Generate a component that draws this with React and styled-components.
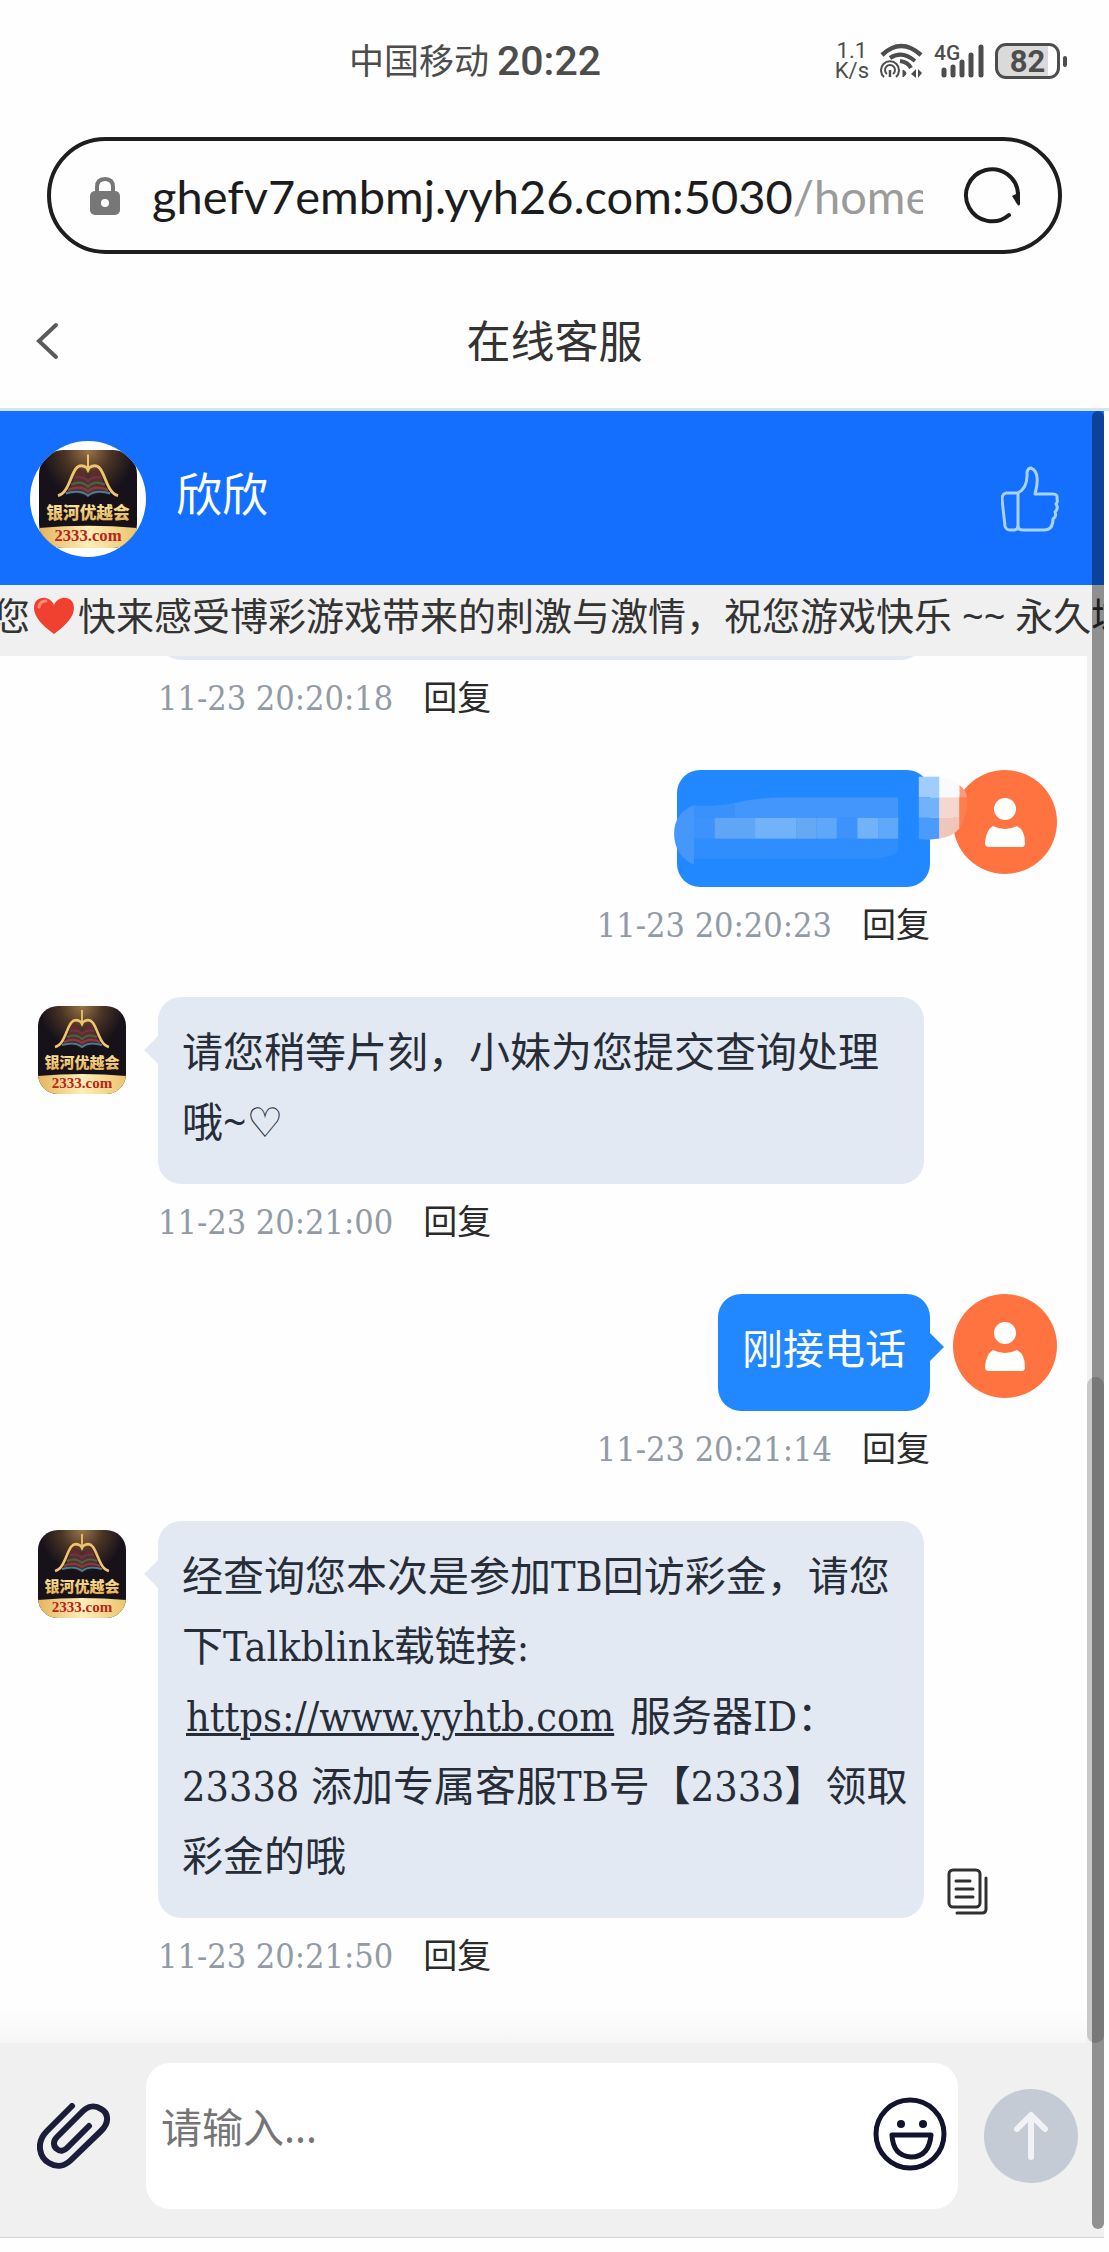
import React, { useState } from 'react';
import styled, { createGlobalStyle } from 'styled-components';

const sans = '"Noto Sans", "Noto Sans CJK SC", sans-serif';
const serif = '"DejaVu Serif Condensed", "Liberation Serif", "Noto Sans CJK SC", serif';

const GlobalStyle = createGlobalStyle`
  * {
    box-sizing: border-box;
  }
  body {
    margin: 0;
    background: #fefefe;
    font-family: ${sans};
    color: #333;
  }
  button {
    border: 0;
    padding: 0;
    background: none;
    font: inherit;
    color: inherit;
    display: flex;
    align-items: center;
    justify-content: center;
  }
  svg {
    display: block;
    flex: none;
  }
`;

const Page = styled.div`
  min-height: 100vh;
  display: flex;
  flex-direction: column;
  padding-bottom: 14px;
`;

const StatusBar = styled.div`
  display: flex;
  align-items: center;
  justify-content: space-between;
  height: 122px;
  padding: 0 42px 0 349px;
  color: #4d4d4d;
`;

const Carrier = styled.div`
  display: flex;
  align-items: center;
  gap: 8px;
  font-size: 35px;
  line-height: 48px;
`;

const Clock = styled.span`
  font-family: Roboto, sans-serif;
  font-size: 41px;
  font-weight: 500;
`;

const Indicators = styled.div`
  display: flex;
  align-items: center;
  justify-content: flex-end;
  gap: 11px;
`;

const Speed = styled.div`
  font-family: Roboto, sans-serif;
  font-size: 22px;
  line-height: 20px;
  text-align: center;
`;

const Battery = styled.div`
  display: flex;
  align-items: center;
  gap: 3px;

  &::after {
    content: '';
    width: 4px;
    height: 11px;
    border-radius: 2px;
    background: #4d4d4d;
  }
`;

const BatteryBody = styled.span`
  width: 65px;
  height: 36px;
  border: 3px solid #4d4d4d;
  border-radius: 11px;
  background: linear-gradient(90deg, #dadada 85%, #fefefe 85%);
  font-family: Roboto, sans-serif;
  font-size: 31px;
  font-weight: 700;
  line-height: 31px;
  text-align: center;
`;

const AddressBar = styled.div`
  display: flex;
  align-items: center;
  height: 117px;
  margin: 15px 47px 0;
  padding: 0 37px 0 39px;
  border: 4px solid #1e1e1e;
  border-radius: 59px;
`;

const Url = styled.div`
  flex: 1;
  min-width: 0;
  margin: 0 40px 0 32px;
  overflow: hidden;
  white-space: nowrap;
  font-family: Lato, sans-serif;
  font-size: 47px;
  line-height: 64px;
  color: #1c1c1c;

  span {
    color: #9b9b9b;
  }
`;

const TitleBar = styled.header`
  display: grid;
  grid-template-columns: 60px 1fr 60px;
  align-items: center;
  height: 157px;
  padding: 20px 18px 0;
  border-bottom: 3px solid #d3e6f5;

  h1 {
    margin: 0;
    font-size: 44px;
    font-weight: 400;
    line-height: 64px;
    text-align: center;
  }
`;

const Chat = styled.main`
  position: relative;
  flex: 1;
  display: flex;
  flex-direction: column;
  margin-right: 5px;
`;

const AgentBar = styled.div`
  display: flex;
  align-items: center;
  gap: 30px;
  height: 174px;
  padding: 2px 45px 0 30px;
  background: #146fff;
  color: #fff;
`;

const AgentPhoto = styled.div`
  display: flex;
  align-items: center;
  justify-content: center;
  width: 116px;
  height: 116px;
  overflow: hidden;
  border-radius: 50%;
  background: #fff;
`;

const PhotoCrop = styled.div`
  border-radius: 24px;
  overflow: hidden;
`;

const AgentName = styled.div`
  flex: 1;
  padding-bottom: 12px;
  font-size: 46px;
  line-height: 64px;
`;

const Notice = styled.div`
  display: flex;
  align-items: center;
  height: 71px;
  padding-bottom: 12px;
  overflow: hidden;
  background: #f0f0f0;
  font-size: 38px;
  line-height: 56px;
  white-space: pre;

  &::before {
    content: '';
    margin-left: -8px;
  }
  svg {
    margin: 0 2px;
  }
`;

const Conversation = styled.div`
  flex: 1;
  display: flex;
  min-height: 0;
`;

const Messages = styled.div`
  flex: 1;
  display: flex;
  flex-direction: column;
  justify-content: flex-end;
  gap: 34px;
  height: 1387px;
  padding: 0 29px 49px 38px;
  overflow: hidden;
  background: linear-gradient(0deg, #f6f6f6, #fefefe 36px);
`;

const Row = styled.div`
  flex: none;
  display: flex;
  align-items: flex-start;
  justify-content: ${(p) => (p.$mine ? 'flex-end' : 'flex-start')};
  gap: ${(p) => (p.$mine ? '23px' : '32px')};
`;

const AgentIcon = styled.div`
  width: 88px;
  height: 88px;
  margin-top: 9px;
  flex: none;
  border-radius: 20px;
  overflow: hidden;
`;

const Body = styled.div`
  display: flex;
  flex-direction: column;
  align-items: ${(p) => (p.$mine ? 'flex-end' : 'flex-start')};
`;

const BubbleLine = styled.div`
  display: flex;
  align-items: flex-end;
  gap: 23px;

  button {
    padding-bottom: 3px;
  }
`;

const Bubble = styled.div`
  position: relative;
  width: ${(p) => (p.$mine ? 'auto' : '766px')};
  min-width: ${(p) => (p.$hidden ? '253px' : '0')};
  min-height: ${(p) => (p.$mine ? '117px' : '187px')};
  padding: ${(p) => (p.$mine ? '21px 24px 26px' : '21px 8px 26px 24px')};
  border-radius: 23px;
  background: ${(p) => (p.$mine ? '#2288ff' : '#e3e9f2')};
  color: ${(p) => (p.$mine ? '#fff' : '#272d38')};
  font-family: ${serif};
  font-size: 41px;
  line-height: 70px;

  &::after {
    content: '';
    display: ${(p) => (p.$hidden ? 'none' : 'block')};
    position: absolute;
    top: 39px;
    ${(p) => (p.$mine ? 'left: 100%' : 'right: 100%')};
    border: 14px solid transparent;
    border-${(p) => (p.$mine ? 'right' : 'left')}-width: 0;
    border-${(p) => (p.$mine ? 'left' : 'right')}-color: ${(p) => (p.$mine ? '#2288ff' : '#e3e9f2')};
  }
  a {
    margin: 0 4px;
    color: inherit;
    text-decoration-thickness: 3px;
  }
`;

const Mood = styled.span`
  font-family: "Noto Sans", "DejaVu Sans", sans-serif;
  line-height: 40px;
`;

const Mosaic = styled.svg`
  position: absolute;
  top: 5px;
  left: -5px;
  z-index: 1;
`;

const Meta = styled.div`
  display: flex;
  align-items: center;
  gap: 30px;
  height: 76px;
  font-family: ${serif};
  font-size: 34px;
  line-height: 48px;
  color: #929ba5;

  button {
    color: #2b2b2b;
  }
`;

const ScrollTrack = styled.div`
  display: flex;
  align-items: flex-end;
  width: 17px;
  background: #f0f0f0;
`;

const ScrollThumb = styled.div`
  width: 17px;
  height: 48%;
  border-radius: 9px;
  background: #c8c8c8;
`;

const PageScroll = styled.div`
  position: absolute;
  top: 0;
  right: 0;
  bottom: 9px;
  width: 12px;
  border-radius: 6px;
  background: rgba(0, 0, 0, 0.4);
`;

const Composer = styled.form`
  display: flex;
  align-items: center;
  height: 195px;
  padding: 0 26px 8px 37px;
  border-bottom: 1px solid #d2d2d2;
  background: #f0f0f0;
`;

const InputBox = styled.div`
  flex: 1;
  display: flex;
  align-items: center;
  height: 146px;
  margin: 0 26px 0 35px;
  padding: 0 10px 0 15px;
  border-radius: 24px;
  background: #fff;

  input {
    flex: 1;
    min-width: 0;
    height: 100%;
    padding: 0 0 18px;
    border: 0;
    outline: 0;
    background: none;
    font-family: ${sans};
    font-size: 41px;
  }
  input::placeholder {
    color: #757575;
  }
  button {
    padding-bottom: 4px;
  }
`;

const SendButton = styled.button`
  && {
    width: 94px;
    height: 94px;
    border-radius: 50%;
    background: #c5cbd4;
  }
`;

function BrandLogo({ size }) {
  return (
    <svg width={size} height={size} viewBox="0 0 88 88" role="img" aria-label="银河优越会">
      <defs>
        <radialGradient id="glow" cx="50%" cy="0%" r="48%">
          <stop offset="0" stopColor="#9a7448" />
          <stop offset="0.5" stopColor="#4a3425" />
          <stop offset="1" stopColor="#17121a" />
        </radialGradient>
        <linearGradient id="gold" x1="0" y1="0" x2="0" y2="1">
          <stop offset="0" stopColor="#fff0a8" />
          <stop offset="1" stopColor="#e2a94c" />
        </linearGradient>
        <linearGradient id="band" x1="0" y1="0" x2="1" y2="0">
          <stop offset="0" stopColor="#e5b45c" />
          <stop offset="0.5" stopColor="#fdeeb8" />
          <stop offset="1" stopColor="#ecc46c" />
        </linearGradient>
      </defs>
      <rect width="88" height="88" fill="url(#glow)" />
      <path d="M44 25 L36 16 C31 23 30 32 25 38 Q36 33 44 40 Q52 33 63 38 C58 32 57 23 52 16 Z" fill="#5c2d2b" />
      <path d="M32 25 Q39 23 44 28 Q49 23 56 25" fill="none" stroke="#6c3648" strokeWidth="2" />
      <path d="M29 31 Q38 27 44 33 Q50 27 59 31" fill="none" stroke="#3f6848" strokeWidth="2" />
      <path d="M26 36 Q37 31 44 37 Q51 31 62 36" fill="none" stroke="#8a3a44" strokeWidth="2" />
      <path d="M24 39 Q37 35 44 41 Q51 35 64 39" fill="none" stroke="#4a7c90" strokeWidth="2" />
      <path d="M17 41 C26 39 28 24 33 17 Q37 12 43 16 L44 18 L45 16 Q51 12 55 17 C60 24 62 39 71 41" fill="none" stroke="#eec46c" strokeWidth="2.6" />
      <path d="M44 4 V19" stroke="#eec46c" strokeWidth="1.8" />
      <text x="44" y="62" textAnchor="middle" fontFamily="Noto Sans CJK SC" fontWeight="900" fontSize="15" fill="url(#gold)">
        银河优越会
      </text>
      <path d="M0 70 Q44 66 88 70 V88 H0 Z" fill="url(#band)" />
      <text x="44" y="82" textAnchor="middle" fontFamily="Liberation Serif" fontWeight="700" fontSize="15" fill="#b8251a">
        2333.com
      </text>
    </svg>
  );
}

function UserAvatar() {
  return (
    <svg width="105" height="105" viewBox="0 0 105 105">
      <circle cx="52" cy="52" r="52" fill="#ff7340" />
      <circle cx="52" cy="39" r="11" fill="#fff" />
      <path d="M40 56 Q52 62 64 56 Q72 60 72 73 Q72 77 69 77 H36 Q32 77 32 73 Q33 60 40 56 Z" fill="#fff" />
    </svg>
  );
}

function HiddenText() {
  return (
    <Mosaic width="298" height="92" viewBox="320 100 850 275" preserveAspectRatio="none">
      <path d="M383 192 H440 C500 188 540 166 640 167 H965 V330 Q940 345 900 350 H383 Z" fill="#308dfd" />
      <path d="M383 190 C345 205 326 235 326 275 C326 318 345 350 383 368 Z" fill="#4697fa" />
      <path d="M383 192 H440 C460 191 480 188 498 184 V228 H383 Z" fill="#3a91fc" />
      <path d="M498 184 Q560 168 640 167 H965 V228 H498 Z" fill="#4296fc" />
      <rect x="383" y="228" width="582" height="62" fill="#3d92fc" />
      <rect x="442" y="228" width="115" height="62" fill="#5fa6f6" />
      <rect x="557" y="228" width="118" height="62" fill="#72b2f8" />
      <rect x="675" y="228" width="57" height="62" fill="#65a9f3" />
      <rect x="732" y="228" width="58" height="62" fill="#5ea7fa" />
      <rect x="849" y="228" width="59" height="62" fill="#72b2f8" />
      <rect x="908" y="228" width="57" height="62" fill="#60a8fb" />
      <rect x="1024" y="105" width="59" height="62" fill="#a0cdfd" />
      <rect x="1024" y="167" width="59" height="61" fill="#70b2fb" />
      <path d="M1024 228 H1083 V290 Q1050 296 1024 291 Z" fill="#4b9bfc" />
      <path d="M1083 105 Q1115 108 1140 130 V167 H1083 Z" fill="#f8fafc" />
      <rect x="1083" y="167" width="57" height="61" fill="#f6d7cd" />
      <path d="M1083 228 H1140 V260 Q1120 285 1083 290 Z" fill="#efc6b9" />
      <path d="M1140 130 Q1158 145 1162 167 H1140 Z" fill="#fb9a7c" />
      <path d="M1140 167 H1162 Q1166 215 1140 260 Z" fill="#fd7f50" />
    </Mosaic>
  );
}

function CopyIcon() {
  return (
    <svg width="42" height="47" viewBox="0 0 42 47" fill="none" stroke="#303030" strokeWidth="3" strokeLinecap="round">
      <rect x="2" y="2" width="31" height="37" rx="4" />
      <path d="M9 13 H23 M9 21 H26 M9 29 H26" />
      <path d="M39 10 V41 Q39 45 35 45 H10" />
    </svg>
  );
}

function Message({ mine, hidden, time, copy, children }) {
  return (
    <Row $mine={mine}>
      {!mine && (
        <AgentIcon>
          <BrandLogo size={88} />
        </AgentIcon>
      )}
      <Body $mine={mine}>
        <BubbleLine>
          <Bubble $mine={mine} $hidden={hidden}>
            {hidden ? <HiddenText /> : children}
          </Bubble>
          {copy && <button type="button" aria-label="复制"><CopyIcon /></button>}
        </BubbleLine>
        <Meta>
          <time>{time}</time>
          <button type="button">回复</button>
        </Meta>
      </Body>
      {mine && <UserAvatar />}
    </Row>
  );
}

function PhoneStatus() {
  return (
    <StatusBar>
      <Carrier>
        中国移动
        <Clock>20:22</Clock>
      </Carrier>
      <Indicators>
        <Speed>
          1.1
          <br />
          K/s
        </Speed>
        <svg width="43" height="36" viewBox="0 0 43 36" fill="none" stroke="#4d4d4d">
          <path d="M2 12 Q21 -6 41 12" strokeWidth="4.5" />
          <path d="M10 15 Q22 7 35 18" strokeWidth="4" />
          <path d="M20 18 Q28 19 31 25" strokeWidth="4" />
          <path d="M4 34 A9 9 0 1 1 16 34" strokeWidth="2" />
          <path d="M7 31 A5 5 0 1 1 13 31" strokeWidth="2" />
          <path d="M10 27 V34" strokeWidth="2.5" />
          <path d="M23 27 Q29 30 23 34 Z" fill="#4d4d4d" strokeWidth="1" />
          <path d="M36 26 V35 L31 31 Z M38 26 V35 L42 30 Z" fill="#4d4d4d" stroke="none" />
        </svg>
        <svg width="50" height="36" viewBox="0 0 50 36">
          <text x="0" y="17" fontFamily="Roboto" fontWeight="500" fontSize="21" fill="#4d4d4d">4G</text>
          <path d="M10 27 V32 M19 24 V32 M28 19 V32 M37 12 V32 M47 4 V32" stroke="#4d4d4d" strokeWidth="5" strokeLinecap="round" />
        </svg>
        <Battery>
          <BatteryBody>82</BatteryBody>
        </Battery>
      </Indicators>
    </StatusBar>
  );
}

function App() {
  const [draft, setDraft] = useState('');

  return (
    <Page>
      <GlobalStyle />
      <PhoneStatus />
      <AddressBar>
        <svg width="30" height="38" viewBox="0 0 30 38">
          <path d="M7 16 V10 Q7 2 15 2 Q23 2 23 10 V16" fill="none" stroke="#777" strokeWidth="4" />
          <rect x="0" y="14" width="30" height="24" rx="5" fill="#777" />
          <circle cx="15" cy="26" r="4" fill="#fefefe" />
        </svg>
        <Url>
          ghefv7embmj.yyh26.com:5030
          <span>/home</span>
        </Url>
        <button type="button" aria-label="刷新">
          <svg width="58" height="58" viewBox="0 0 58 58">
            <path d="M46 48 A26 26 0 1 1 55 27" fill="none" stroke="#1c1c1c" strokeWidth="4" strokeLinecap="round" />
            <path d="M49 29 L57 25 V37 Q56 40 54 37 Z" fill="#1c1c1c" />
          </svg>
        </button>
      </AddressBar>
      <TitleBar>
        <button type="button" aria-label="返回">
          <svg width="24" height="38" viewBox="0 0 24 38">
            <path d="M20 3 L3 19 L20 35" fill="none" stroke="#5a5a5a" strokeWidth="4" strokeLinecap="round" />
          </svg>
        </button>
        <h1>在线客服</h1>
      </TitleBar>
      <Chat>
        <AgentBar>
          <AgentPhoto>
            <PhotoCrop>
              <BrandLogo size={98} />
            </PhotoCrop>
          </AgentPhoto>
          <AgentName>欣欣</AgentName>
          <button type="button" aria-label="点赞">
            <svg width="58" height="66" viewBox="0 0 58 66" fill="none" stroke="#a8d2ff" strokeWidth="3" strokeLinejoin="round">
              <path d="M17 27 H5 Q1 28 1 33 L4 60 Q5 64 9 64 H13 Q17 64 17 59 Z" />
              <path d="M17 27 Q27 22 26 6 Q27 2 30 2 Q40 6 34 28 H52 Q57 28 56 33 Q57 36 55 38 Q58 42 54 46 Q56 50 52 53 Q52 64 43 64 H22 Q17 64 17 60" />
            </svg>
          </button>
        </AgentBar>
        <Notice>
          <span>您</span>
          <svg width="44" height="44" viewBox="0 0 44 44">
            <path d="M22 41 C10 32 2 24 2 15 C2 3 17 1 22 12 C27 1 42 3 42 15 C42 24 34 32 22 41 Z" fill="#f0402f" />
            <path d="M7 14 Q8 8 14 8" fill="none" stroke="#ff8a78" strokeWidth="3" strokeLinecap="round" />
          </svg>
          <span>快来感受博彩游戏带来的刺激与激情，祝您游戏快乐 ~~ 永久域</span>
        </Notice>
        <Conversation>
          <Messages>
            <Message time="11-23 20:20:18" />
            <Message mine hidden time="11-23 20:20:23" />
            <Message time="11-23 20:21:00">
              请您稍等片刻，小妹为您提交查询处理哦
              <Mood>~♡</Mood>
            </Message>
            <Message mine time="11-23 20:21:14">刚接电话</Message>
            <Message time="11-23 20:21:50" copy>
              经查询您本次是参加TB回访彩金，请您下Talkblink载链接:
              <br />
              <a href="https://www.yyhtb.com">https://www.yyhtb.com</a>
              {' 服务器ID：23338 添加专属客服TB号【2333】领取彩金的哦'}
            </Message>
          </Messages>
          <ScrollTrack>
            <ScrollThumb />
          </ScrollTrack>
        </Conversation>
        <Composer onSubmit={(e) => e.preventDefault()}>
          <button type="button" aria-label="附件">
            <svg width="74" height="66" viewBox="0 0 74 66" fill="none" stroke="#1b1d3a" strokeWidth="6" strokeLinecap="round" strokeLinejoin="round">
              <path d="M35 3 L10 28 C-2 40 3 55 12 60 C20 65 28 63 34 57 L64 28 C74 18 70 9 64 6 C58 2 51 3 46 8 L20 34 C15 39 17 44 20 46 C23 49 27 48 30 45 L52 23" />
            </svg>
          </button>
          <InputBox>
            <input
              aria-label="消息"
              placeholder="请输入..."
              value={draft}
              onChange={(e) => setDraft(e.target.value)}
            />
            <button type="button" aria-label="表情">
              <svg width="75" height="75" viewBox="0 0 75 75" fill="none" stroke="#12142f" strokeWidth="5">
                <circle cx="37" cy="37" r="34" />
                <path d="M19 38 H58 Q56 60 38 60 Q20 59 19 38 Z" strokeLinejoin="round" />
                <circle cx="28" cy="27" r="4" fill="#12142f" stroke="none" />
                <circle cx="50" cy="27" r="4" fill="#12142f" stroke="none" />
              </svg>
            </button>
          </InputBox>
          <SendButton type="submit" aria-label="发送">
            <svg width="36" height="50" viewBox="0 0 36 50" fill="none" stroke="#f0f2f6" strokeWidth="6" strokeLinecap="round" strokeLinejoin="round">
              <path d="M18 46 V4 M4 18 L18 4 L32 18" />
            </svg>
          </SendButton>
        </Composer>
        <PageScroll />
      </Chat>
    </Page>
  );
}

export default App;
